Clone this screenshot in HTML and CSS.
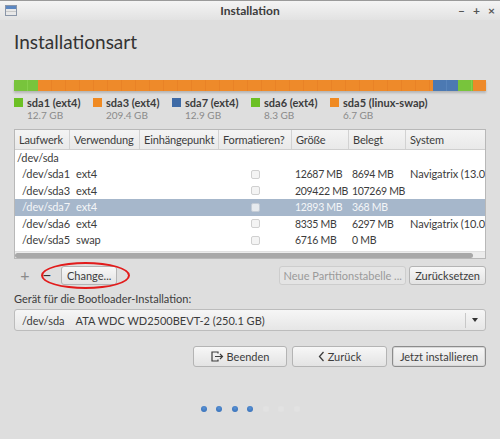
FILE: index.html
```html
<!DOCTYPE html>
<html lang="de">
<head>
<meta charset="utf-8">
<title>Installation</title>
<link rel="stylesheet" href="styles.css">
</head>
<body>
<div class="window">
  <div class="titlebar">
    <svg class="winicon" width="12" height="11" viewBox="0 0 12 11">
      <rect x="0.5" y="0.5" width="11" height="10" fill="#e8e8e8" stroke="#8a96a8"/>
      <rect x="1" y="1" width="10" height="3" fill="#5b87c2"/>
      <rect x="1" y="6" width="10" height="1" fill="#c8c8c8"/>
    </svg>
    <span class="title">Installation</span>
    <div class="controls"><span>–</span><span>+</span><span>×</span></div>
  </div>

  <div class="content">
    <h1 class="heading">Installationsart</h1>

    <div class="pbar">
      <div class="seg seg-green" style="flex-grow:12.7"></div>
      <div class="seg seg-orange" style="flex-grow:209.4"></div>
      <div class="seg seg-blue" style="flex-grow:12.9"></div>
      <div class="seg seg-green" style="flex-grow:8.3"></div>
      <div class="seg seg-orange" style="flex-grow:6.7"></div>
    </div>

    <div class="legend">
      <div class="litem"><span class="sq sq-green"></span><div><div class="lname">sda1 (ext4)</div><div class="lsize">12.7 GB</div></div></div>
      <div class="litem"><span class="sq sq-orange"></span><div><div class="lname">sda3 (ext4)</div><div class="lsize">209.4 GB</div></div></div>
      <div class="litem"><span class="sq sq-blue"></span><div><div class="lname">sda7 (ext4)</div><div class="lsize">12.9 GB</div></div></div>
      <div class="litem"><span class="sq sq-green"></span><div><div class="lname">sda6 (ext4)</div><div class="lsize">8.3 GB</div></div></div>
      <div class="litem"><span class="sq sq-orange"></span><div><div class="lname">sda5 (linux-swap)</div><div class="lsize">6.7 GB</div></div></div>
    </div>

    <div class="tablebox">
      <div class="grid thead">
        <div class="th">Laufwerk</div>
        <div class="th">Verwendung</div>
        <div class="th">Einhängepunkt</div>
        <div class="th">Formatieren?</div>
        <div class="th">Größe</div>
        <div class="th">Belegt</div>
        <div class="th last">System</div>
      </div>
      <div class="tbody">
        <div class="grid row">
          <div class="td c-dev root">/dev/sda</div>
          <div class="td"></div><div class="td"></div><div class="td"></div><div class="td"></div><div class="td"></div><div class="td"></div>
        </div>
        <div class="grid row">
          <div class="td c-dev">/dev/sda1</div>
          <div class="td c-use">ext4</div><div class="td"></div>
          <div class="td c-chk"><span class="chk"></span></div>
          <div class="td num">12687 MB</div><div class="td num">8694 MB</div><div class="td c-sys">Navigatrix (13.0</div>
        </div>
        <div class="grid row">
          <div class="td c-dev">/dev/sda3</div>
          <div class="td c-use">ext4</div><div class="td"></div>
          <div class="td c-chk"><span class="chk"></span></div>
          <div class="td num">209422 MB</div><div class="td num">107269 MB</div><div class="td c-sys"></div>
        </div>
        <div class="grid row selected">
          <div class="td c-dev">/dev/sda7</div>
          <div class="td c-use">ext4</div><div class="td"></div>
          <div class="td c-chk"><span class="chk"></span></div>
          <div class="td num">12893 MB</div><div class="td num">368 MB</div><div class="td c-sys"></div>
        </div>
        <div class="grid row">
          <div class="td c-dev">/dev/sda6</div>
          <div class="td c-use">ext4</div><div class="td"></div>
          <div class="td c-chk"><span class="chk"></span></div>
          <div class="td num">8335 MB</div><div class="td num">6297 MB</div><div class="td c-sys">Navigatrix (10.0</div>
        </div>
        <div class="grid row">
          <div class="td c-dev">/dev/sda5</div>
          <div class="td c-use">swap</div><div class="td"></div>
          <div class="td c-chk"><span class="chk"></span></div>
          <div class="td num">6716 MB</div><div class="td num">0 MB</div><div class="td c-sys"></div>
        </div>
      </div>
      <div class="hscroll"><div class="thumb"></div></div>
    </div>

    <div class="actions">
      <span class="tool plus">+</span>
      <span class="tool minus">−</span>
      <button class="btn small">Change...</button>
      <span class="circle"></span>
      <div class="spacer"></div>
      <button class="btn small disabled">Neue Partitionstabelle ...</button>
      <button class="btn small">Zurücksetzen</button>
    </div>

    <div class="bootlabel">Gerät für die Bootloader-Installation:</div>
    <div class="combo">
      <span class="combo-text"><span class="combo-dev">/dev/sda</span>ATA WDC WD2500BEVT-2 (250.1 GB)</span>
      <span class="combo-sep"></span>
      <span class="combo-arrow"></span>
    </div>

    <div class="footer">
      <button class="btn big"><svg class="ico" width="13" height="11" viewBox="0 0 13 11"><path d="M7 2.5V1H1v9h6V8.5" fill="none" stroke="#3c3c3c" stroke-width="1.2"/><path d="M4 5.5h7.5M9 3l2.5 2.5L9 8" fill="none" stroke="#3c3c3c" stroke-width="1.2"/></svg>Beenden</button>
      <button class="btn big"><svg class="ico" width="7" height="11" viewBox="0 0 7 11"><path d="M5.5 1L1.5 5.5l4 4.5" fill="none" stroke="#3c3c3c" stroke-width="1.3"/></svg>Zurück</button>
      <button class="btn big default">Jetzt installieren</button>
    </div>

    <div class="dots">
      <span class="dot on"></span><span class="dot on"></span><span class="dot on"></span><span class="dot on"></span>
      <span class="dot"></span><span class="dot"></span><span class="dot"></span>
    </div>
  </div>
</div>
</body>
</html>
```

FILE: styles.css
```css
* { box-sizing: border-box; }
html, body { margin: 0; padding: 0; }
body {
  width: 500px;
  height: 439px;
  overflow: hidden;
  background: #dedede;
  font-family: Lato, "Noto Sans", sans-serif;
  font-size: 11px;
  color: #3c3c3c;
}
.window { width: 500px; height: 439px; background: #dedede; }

.titlebar {
  height: 20px;
  display: flex;
  align-items: center;
  position: relative;
  background: linear-gradient(#f4f4f4, #e2e2e2);
  border-top: 1px solid #9a9a9a;
  padding: 0 5px;
}
.winicon { display: block; }
.title {
  position: absolute;
  left: 0; right: 0;
  text-align: center;
  font-weight: bold;
  font-size: 12px;
  color: #3c3c3c;
}
.controls {
  margin-left: auto;
  display: flex;
  gap: 8px;
  font-size: 12px;
  color: #555;
  font-weight: bold;
}

.content { padding: 0 14px; }

.heading {
  margin: 0;
  padding-top: 9px;
  height: 60px;
  font-weight: normal;
  font-size: 19px;
  line-height: 26px;
  color: #333;
}

.pbar {
  display: flex;
  height: 11px;
  box-shadow: 0 2px 2px rgba(0,0,0,0.18);
}
.seg { flex-basis: 0; height: 100%; }
.seg-green {
  background: repeating-linear-gradient(90deg, #78c43c 0 13px, #86cf4c 13px 14px);
}
.seg-orange {
  background: repeating-linear-gradient(90deg, #ee8a2a 0 13px, #e98226 13px 14px);
}
.seg-blue {
  background: repeating-linear-gradient(90deg, #4c79b2 0 13px, #5884bb 13px 14px);
}

.legend {
  display: flex;
  margin-top: 5px;
  height: 33px;
}
.litem { width: 79px; display: flex; gap: 4px; }
.sq { width: 9px; height: 9px; margin-top: 2px; flex: none; }
.sq-green { background: #6cc024; }
.sq-orange { background: #f08a22; }
.sq-blue { background: #3e6aa6; }
.lname { font-size: 11px; font-weight: bold; color: #3c3c3c; line-height: 13px; white-space: nowrap; }
.lsize { font-size: 10px; color: #8a8a8a; line-height: 13px; }

.tablebox {
  width: 472px;
  height: 130px;
  background: #fff;
  border: 1px solid #b8b8b8;
  display: flex;
  flex-direction: column;
}
.grid {
  display: grid;
  grid-template-columns: 55px 70px 79px 73px 57px 57px 1fr;
}
.thead {
  height: 20px;
  background: linear-gradient(#f4f4f4, #e9e9e9);
  border-bottom: 1px solid #cfcfcf;
}
.th {
  padding-left: 4px;
  line-height: 19px;
  border-right: 1px solid #d2d2d2;
  white-space: nowrap;
  overflow: hidden;
  color: #3c3c3c;
  letter-spacing: -0.15px;
}
.th.last { border-right: none; }
.tbody { flex: 1; }
.row { height: 16.4px; }
.td {
  padding-left: 4px;
  line-height: 16px;
  white-space: nowrap;
  overflow: visible;
  color: #3c3c3c;
  letter-spacing: -0.1px;
}
.td.num { font-size: 10.5px; letter-spacing: -0.3px; padding-left: 3px; }
.c-dev { padding-left: 7px; }
.c-dev.root { padding-left: 2px; }
.c-use { padding-left: 6px; }
.c-sys { overflow: hidden; }
.c-chk { display: flex; align-items: center; padding-left: 32px; }
.chk {
  width: 9px; height: 9px;
  border: 1px solid #d0d0d0;
  border-radius: 2px;
  background: #f4f4f4;
}
.selected { background: #a6b7cb; }
.selected .td { color: #f4f6f8; }
.selected .chk { background: #e6eaee; border-color: #c4ccd6; }

.hscroll {
  height: 7px;
  background: #ececec;
  border-top: 1px solid #e0e0e0;
  display: flex;
  align-items: center;
}
.thumb {
  width: 458px;
  height: 5px;
  border-radius: 3px;
  background: #a8a8a8;
}

.actions {
  position: relative;
  display: flex;
  align-items: center;
  gap: 6px;
  margin-top: 6px;
  height: 20px;
}
.tool { font-size: 16px; line-height: 20px; color: #8a8a8a; width: 16px; text-align: center; }
.plus { margin-left: 3px; }
.minus { color: #333; }
.spacer { flex: 1; }
.circle {
  position: absolute;
  left: 27px;
  top: -3px;
  width: 89px;
  height: 27px;
  border: 2px solid #e21b1b;
  border-radius: 50%;
  pointer-events: none;
}

.btn {
  font-family: inherit;
  font-size: 11px;
  color: #3c3c3c;
  background: linear-gradient(#f7f7f7, #e3e3e3);
  border: 1px solid #b4b4b4;
  border-radius: 3px;
  padding: 0 5px;
  height: 20px;
  display: inline-flex;
  align-items: center;
  justify-content: center;
  gap: 3px;
  white-space: nowrap;
}
.btn.small { height: 19px; }
.btn.disabled { color: #9a9a9a; background: #e4e4e4; border-color: #cdcdcd; width: 127px; }
.actions .btn + .btn { margin-left: -3px; }

.bootlabel { margin-top: 7px; line-height: 14px; }
.combo {
  margin-top: 3px;
  height: 22px;
  border: 1px solid #bcbcbc;
  border-radius: 3px;
  background: linear-gradient(#f6f6f6, #e6e6e6);
  display: flex;
  align-items: center;
  padding-left: 7px;
}
.combo-text { flex: 1; white-space: nowrap; }
.combo-dev { margin-right: 11px; }
.combo-sep { width: 1px; height: 15px; background: #c8c8c8; margin-right: 6px; }
.combo-arrow {
  width: 0; height: 0;
  border-left: 3px solid transparent;
  border-right: 3px solid transparent;
  border-top: 4px solid #333;
  margin-right: 7px;
}

.footer {
  display: flex;
  justify-content: flex-end;
  gap: 5px;
  margin-top: 15px;
}
.btn.big { height: 21px; width: 94px; }
.btn.big:nth-child(2) { width: 95px; }
.btn.default { border-color: #8c8c8c; box-shadow: inset 0 0 0 1px #d8d8d8; }
.ico { display: block; }

.dots {
  display: flex;
  justify-content: center;
  gap: 9.5px;
  margin-top: 39px;
}
.dot {
  width: 6px; height: 6px;
  border-radius: 50%;
  background: #e2e2e2;
}
.dot.on { background: radial-gradient(circle at 50% 35%, #5a92d4, #2f69b4); }
```
